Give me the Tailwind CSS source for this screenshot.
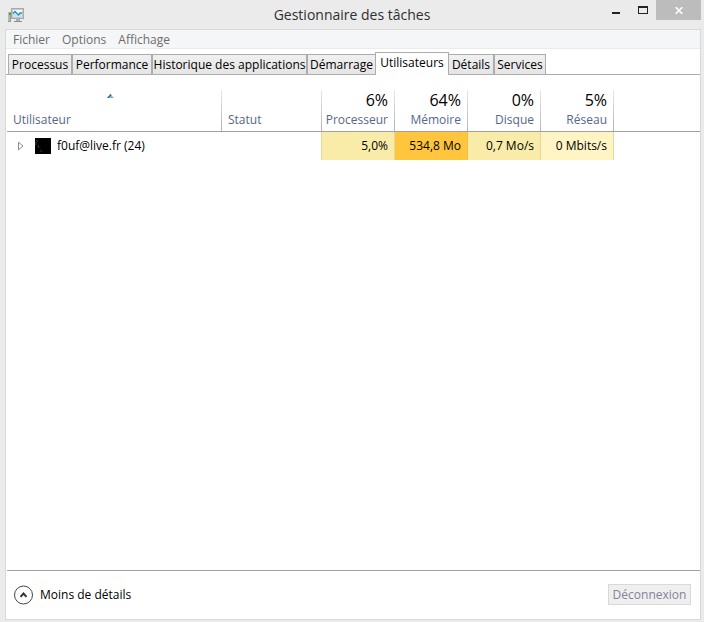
<!DOCTYPE html>
<html lang="fr">
<head>
  <meta charset="UTF-8">
  <meta name="viewport" content="width=device-width, initial-scale=1.0">
  <title>Gestionnaire des tâches</title>
  <script src="https://cdn.jsdelivr.net/npm/@tailwindcss/browser@4"></script>
</head>
<body class="bg-[#ebebeb] font-['Open_Sans','Noto_Sans',sans-serif] text-[12px] leading-4 text-black">
  <div class="flex h-screen flex-col">

    <!-- Title bar -->
    <header class="grid h-[29px] shrink-0 grid-cols-[1fr_auto_1fr] items-start">
      <svg class="mt-2 ml-2" width="16" height="15" viewBox="0 0 16 15" shape-rendering="crispEdges">
        <rect x="0" y="4" width="3" height="10" fill="#9a9a9a"/>
        <rect x="0" y="4" width="2" height="9" fill="#b9b9b9"/>
        <rect x="1" y="5" width="2" height="2" fill="#35b32a"/>
        <rect x="3" y="0" width="13" height="11" fill="#a9a9a9"/>
        <rect x="4" y="1" width="11" height="9" fill="#c9c9c9"/>
        <rect x="5" y="2" width="9" height="7" fill="#f4fbff"/>
        <path d="M5 5h2l2 2h2l1-1h2v3H5z" fill="#bfe6fb"/>
        <path d="M5 5.500L7 3.500L10.500 7L12 5L14 5" fill="none" stroke="#2a86c8" stroke-width="1.300" shape-rendering="auto"/>
        <rect x="8" y="11" width="4" height="2" fill="#b0b0b0"/>
        <rect x="6" y="13" width="8" height="1" fill="#8c8c8c"/>
      </svg>
      <h1 class="pt-1 text-[14px] leading-[22px] text-[#2f2f2f]">Gestionnaire des tâches</h1>
      <div class="flex justify-end pr-[3px]">
        <button type="button" aria-label="Réduire" class="flex h-5 w-[27px] items-start justify-center pt-3">
          <span class="h-[2px] w-2 bg-[#222]"></span>
        </button>
        <button type="button" aria-label="Agrandir" class="flex h-5 w-[27px] items-start justify-center pt-[6px]">
          <span class="h-2 w-[10px] border border-t-2 border-[#222]"></span>
        </button>
        <button type="button" aria-label="Fermer" class="flex h-5 w-[45px] items-start justify-center bg-[#bcbcbc] pt-[7px]">
          <svg width="8" height="7" viewBox="0 0 8 7"><path d="M.7.200L7.300 6.800M7.300.200L.7 6.800" stroke="#fff" stroke-width="1.600"/></svg>
        </button>
      </div>
    </header>

    <div class="mr-[3px] mb-[2px] ml-[5px] flex flex-1 flex-col border border-[#d9d9d9] bg-white">

      <!-- Menu -->
      <nav class="flex h-[19px] shrink-0 items-center gap-3 border-b border-[#ebebeb] bg-[#f5f6f7] pt-[2px] pl-[7px] text-[#6d6d6d]">
        <a href="#">Fichier</a>
        <a href="#">Options</a>
        <a href="#">Affichage</a>
      </nav>

      <!-- Tabs -->
      <div role="tablist" class="mt-[3px] flex h-[23px] shrink-0 items-end border-b border-[#acacac] pl-[2px] whitespace-nowrap">
        <button role="tab" class="h-5 w-16 border border-b-0 border-[#acacac] bg-linear-to-b from-[#f0f0f0] to-[#e5e5e5]">Processus</button>
        <button role="tab" class="h-5 w-20 border border-b-0 border-[#acacac] bg-linear-to-b from-[#f0f0f0] to-[#e5e5e5]">Performance</button>
        <button role="tab" class="h-5 w-[155px] border border-b-0 border-[#acacac] bg-linear-to-b from-[#f0f0f0] to-[#e5e5e5]">Historique des applications</button>
        <button role="tab" class="h-5 w-[68px] border border-r-0 border-b-0 border-[#acacac] bg-linear-to-b from-[#f0f0f0] to-[#e5e5e5]">Démarrage</button>
        <button role="tab" aria-selected="true" class="-mb-px h-[23px] w-[74px] border border-b-0 border-[#acacac] bg-white pb-[2px]">Utilisateurs</button>
        <button role="tab" class="h-5 w-[45px] border border-b-0 border-l-0 border-[#acacac] bg-linear-to-b from-[#f0f0f0] to-[#e5e5e5]">Détails</button>
        <button role="tab" class="h-5 w-[52px] border border-b-0 border-[#acacac] bg-linear-to-b from-[#f0f0f0] to-[#e5e5e5]">Services</button>
      </div>

      <!-- Users -->
      <main class="flex-1 pt-[15px] pl-px">
        <table class="w-full table-fixed border-separate border-spacing-0">
          <colgroup>
            <col class="w-[215px]">
            <col class="w-[100px]">
            <col class="w-[73px]">
            <col class="w-[73px]">
            <col class="w-[73px]">
            <col class="w-[73px]">
            <col>
          </colgroup>
          <thead>
            <tr class="h-[42px] align-bottom text-[#566787]">
              <th class="border-b border-[#a0a0a0] bg-[linear-gradient(#e8e8e8,#b4b4b4)] bg-[length:1px_100%] bg-right bg-no-repeat pr-[14px] pb-[3px] pl-[6px] text-left font-normal">
                <svg class="mx-auto mb-[14px]" width="7" height="4" viewBox="0 0 7 4"><path d="M0 4L3.500 0L7 4z" fill="#7fb6d8"/><path d="M0 4L3.500 0L4.500 1L1.500 4z" fill="#35678a"/></svg>
                Utilisateur
              </th>
              <th class="border-b border-[#a0a0a0] bg-[linear-gradient(#e8e8e8,#b4b4b4)] bg-[length:1px_100%] bg-right bg-no-repeat pb-[3px] pl-[6px] text-left font-normal">Statut</th>
              <th class="border-b border-[#a0a0a0] bg-[linear-gradient(#e8e8e8,#b4b4b4)] bg-[length:1px_100%] bg-right bg-no-repeat pr-[7px] pb-[3px] text-right font-normal"><span class="block pb-[2px] text-[16px] leading-5 text-black">6%</span>Processeur</th>
              <th class="border-b border-[#a0a0a0] bg-[linear-gradient(#e8e8e8,#b4b4b4)] bg-[length:1px_100%] bg-right bg-no-repeat pr-[7px] pb-[3px] text-right font-normal"><span class="block pb-[2px] text-[16px] leading-5 text-black">64%</span>Mémoire</th>
              <th class="border-b border-[#a0a0a0] bg-[linear-gradient(#e8e8e8,#b4b4b4)] bg-[length:1px_100%] bg-right bg-no-repeat pr-[7px] pb-[3px] text-right font-normal"><span class="block pb-[2px] text-[16px] leading-5 text-black">0%</span>Disque</th>
              <th class="border-b border-[#a0a0a0] bg-[linear-gradient(#e8e8e8,#b4b4b4)] bg-[length:1px_100%] bg-right bg-no-repeat pr-[7px] pb-[3px] text-right font-normal"><span class="block pb-[2px] text-[16px] leading-5 text-black">5%</span>Réseau</th>
              <th class="border-b border-[#a0a0a0]"></th>
            </tr>
          </thead>
          <tbody>
            <tr class="h-7">
              <td>
                <div class="flex items-center pl-[10px]">
                  <svg width="8" height="10" viewBox="0 0 8 10"><path d="M1.500 1.200L6 5L1.500 8.800z" fill="none" stroke="#8a8a8a"/></svg>
                  <svg class="ml-[10px]" width="16" height="16" viewBox="0 0 16 16"><rect width="16" height="16"/><path d="M1 2l2 2M1 4v3M3 7l1 3M5 12l2 2" stroke="#3c3c36"/></svg>
                  <span class="ml-[6px]">f0uf@live.fr (24)</span>
                </div>
              </td>
              <td class="border-r border-[#e6d7a0]"></td>
              <td class="border-r border-[#e6d7a0] bg-[#f9eca8] pr-[6px] text-right">5,0%</td>
              <td class="border-r border-[#f0bd48] bg-[#ffc53d] pr-[6px] text-right">534,8 Mo</td>
              <td class="border-r border-[#e6d7a0] bg-[#f9eca8] pr-[6px] text-right">0,7 Mo/s</td>
              <td class="border-r border-[#e6d7a0] bg-[#fff4c4] pr-[6px] text-right">0 Mbits/s</td>
              <td></td>
            </tr>
          </tbody>
        </table>
      </main>

      <!-- Footer -->
      <footer class="ml-px flex h-[49px] shrink-0 items-center justify-between border-t border-[#a0a0a0] pr-[9px] pb-px pl-[7px]">
        <button type="button" class="flex items-center gap-[6px]">
          <svg width="20" height="20" viewBox="0 0 20 20" fill="none"><circle cx="9.500" cy="10" r="9" stroke="#444"/><path d="M6.500 11.800L9.500 8.500L12.500 11.800" stroke="#333" stroke-width="2"/></svg>
          Moins de détails
        </button>
        <button type="button" disabled class="h-[21px] w-[83px] border border-[#d9d9d9] bg-[#efefef] text-[#838399]">Déconnexion</button>
      </footer>
    </div>
  </div>
</body>
</html>
